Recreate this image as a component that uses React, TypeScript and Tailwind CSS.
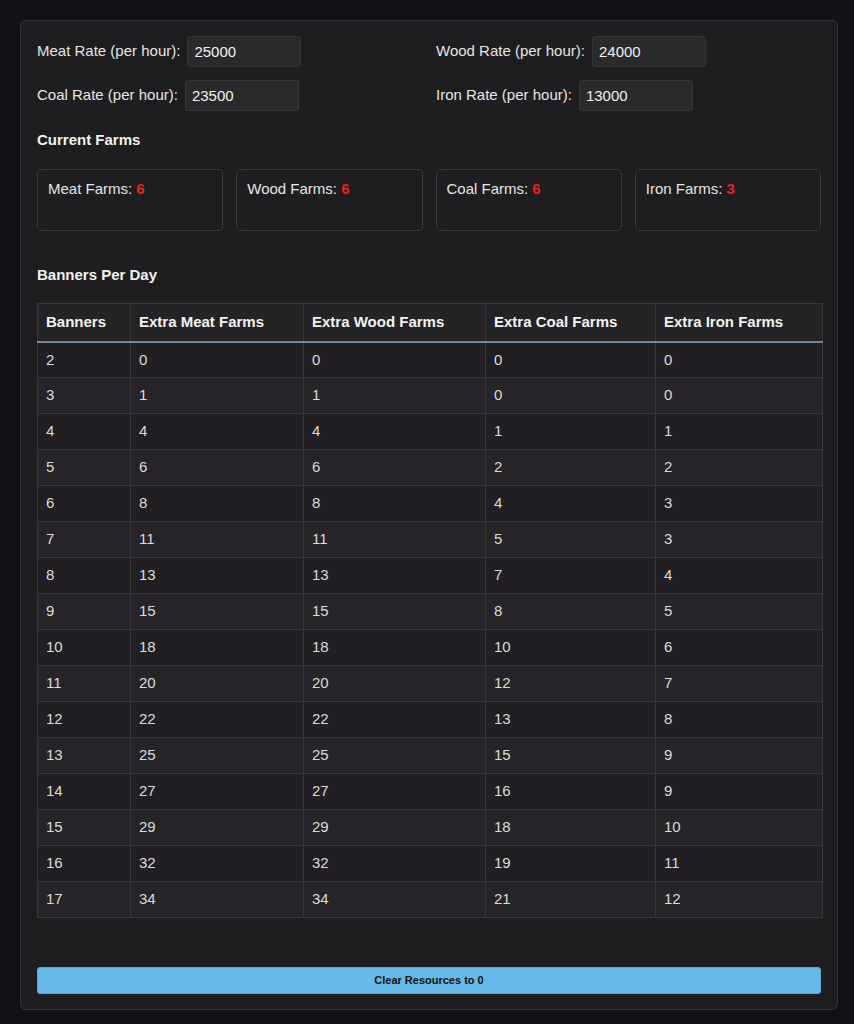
import React from 'react';

const rates = [
  { label: 'Meat Rate (per hour):', value: '25000' },
  { label: 'Wood Rate (per hour):', value: '24000' },
  { label: 'Coal Rate (per hour):', value: '23500' },
  { label: 'Iron Rate (per hour):', value: '13000' },
];

const farms = [
  { label: 'Meat Farms:', value: 6 },
  { label: 'Wood Farms:', value: 6 },
  { label: 'Coal Farms:', value: 6 },
  { label: 'Iron Farms:', value: 3 },
];

const columns = [
  { title: 'Banners', width: 'w-[93px]' },
  { title: 'Extra Meat Farms', width: 'w-[173px]' },
  { title: 'Extra Wood Farms', width: 'w-[182px]' },
  { title: 'Extra Coal Farms', width: 'w-[170px]' },
  { title: 'Extra Iron Farms', width: 'w-[167px]' },
];

const rows = [
  [2, 0, 0, 0, 0],
  [3, 1, 1, 0, 0],
  [4, 4, 4, 1, 1],
  [5, 6, 6, 2, 2],
  [6, 8, 8, 4, 3],
  [7, 11, 11, 5, 3],
  [8, 13, 13, 7, 4],
  [9, 15, 15, 8, 5],
  [10, 18, 18, 10, 6],
  [11, 20, 20, 12, 7],
  [12, 22, 22, 13, 8],
  [13, 25, 25, 15, 9],
  [14, 27, 27, 16, 9],
  [15, 29, 29, 18, 10],
  [16, 32, 32, 19, 11],
  [17, 34, 34, 21, 12],
];

export default function App() {
  return (
    <div className="min-h-screen bg-[#121115] pt-5 pl-5 pr-4 pb-4 font-['Liberation_Sans',Arial,sans-serif] text-[15px] text-[#e6e6e6]">
      <div className="w-[818px] rounded-md border border-[#333236] bg-[#1e1d20] px-4 pt-[15px] pb-[15px]">
        {/* Rate inputs */}
        <div className="grid grid-cols-2 gap-x-[14px] gap-y-[13px]">
          {rates.map((r) => (
            <div key={r.label} className="flex items-center gap-[7px]">
              <span>{r.label}</span>
              <input
                defaultValue={r.value}
                className="h-[31px] w-[114px] rounded-[3px] border border-[#353438] bg-[#2a292c] px-[6px] text-[15px] text-[#f0f0f0] outline-none"
              />
            </div>
          ))}
        </div>

        <h3 className="mt-[18px] font-bold text-[#f2f2f2]">Current Farms</h3>
        <div className="mt-[17px] grid grid-cols-4 gap-[13px]">
          {farms.map((f) => (
            <div key={f.label} className="h-[62px] rounded-[5px] border border-[#3a393d] bg-[#1e1d20] px-[10px] pt-[8px]">
              {f.label} <span className="font-bold text-[#e8231c]">{f.value}</span>
            </div>
          ))}
        </div>

        <h3 className="mt-[33px] font-bold text-[#f2f2f2]">Banners Per Day</h3>
        <table className="mt-[17px] w-full table-fixed border-collapse">
          <thead>
            <tr className="bg-[#242326]">
              {columns.map((c) => (
                <th
                  key={c.title}
                  className={`${c.width} h-[38px] border border-b-2 border-[#38373b] border-b-[#6f8ba0] px-[8px] text-left font-bold text-[#f2f2f2]`}
                >
                  {c.title}
                </th>
              ))}
            </tr>
          </thead>
          <tbody>
            {rows.map((row, i) => (
              <tr key={row[0]} className={i % 2 === 0 ? 'bg-[#211f23]' : 'bg-[#262428]'}>
                {row.map((v, j) => (
                  <td key={j} className="h-[36px] border border-[#38373b] px-[8px] text-[#dcdcdc]">
                    {v}
                  </td>
                ))}
              </tr>
            ))}
          </tbody>
        </table>

        <button className="mt-[49px] h-[27px] w-full rounded-[3px] border border-[#58a8d8] bg-[#66b9e8] text-[11px] font-bold text-[#111]">
          Clear Resources to 0
        </button>
      </div>
    </div>
  );
}
